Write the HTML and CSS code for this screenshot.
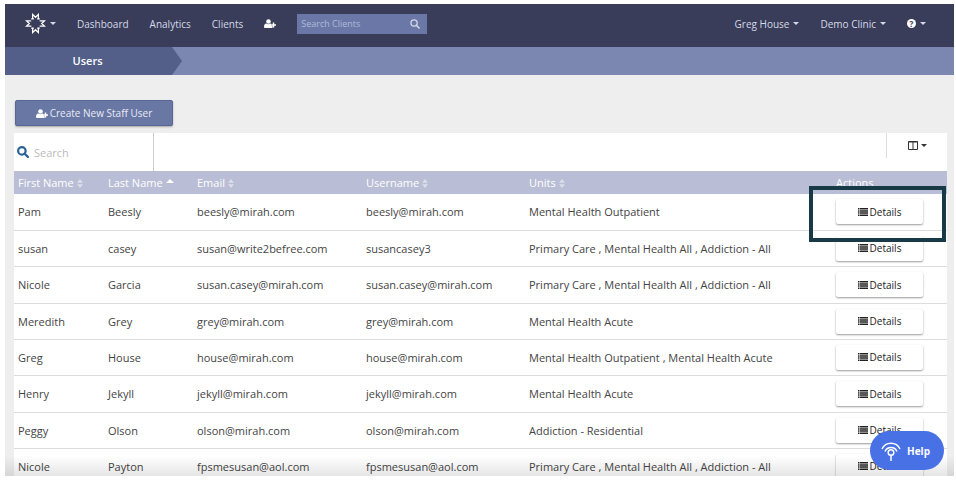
FILE: index.html
```html
<!DOCTYPE html>
<html lang="en">
<head>
    <meta charset="UTF-8">
    <meta name="viewport" content="width=device-width, initial-scale=1.0">
    <title>Users</title>
    <link rel="stylesheet" href="styles.css">
</head>
<body>

    <!-- shared icons -->
    <svg class="sprite" aria-hidden="true">
        <symbol id="user-plus" viewBox="0 0 24 18">
            <circle cx="9" cy="5" r="4.6"/>
            <path d="M5 9c1 1 2.500 1.600 4 1.600S12 10 13 9c1 .2 1.800.6 2.400 1.200H14v4h3v3.600H2.500C1 17.800 0 16.800 0 15.300 0 12 1.500 9.200 5 9z"/>
            <path d="M17.500 7h3v3.500H24v3h-3.500V17h-3v-3.500H14v-3h3.500z"/>
        </symbol>
        <symbol id="search" viewBox="0 0 16 16">
            <circle cx="6.500" cy="6.500" r="5" fill="none" stroke="currentColor" stroke-width="2"/>
            <path d="M10 10l4.500 4.500" stroke="currentColor" stroke-width="2.500" stroke-linecap="round"/>
        </symbol>
        <symbol id="search-bold" viewBox="0 0 16 16">
            <circle cx="6.500" cy="6.500" r="5" fill="none" stroke="currentColor" stroke-width="3"/>
            <path d="M10 10l4.500 4.500" stroke="currentColor" stroke-width="3" stroke-linecap="round"/>
        </symbol>
        <symbol id="sort" viewBox="0 0 8 12">
            <path d="M0 5l4-5 4 5zM0 7l4 5 4-5z"/>
        </symbol>
        <symbol id="list" viewBox="0 0 20 16">
            <path d="M0 0h3v3H0zM4 0h16v3H4zM0 4.300h3v3H0zM4 4.300h16v3H4zM0 8.600h3v3H0zM4 8.600h16v3H4zM0 13h3v3H0zM4 13h16v3H4z"/>
        </symbol>
    </svg>

    <div class="app">
        <nav class="navbar">
            <a class="brand" href="#" aria-label="Home">
                <svg class="logo" viewBox="0 0 22 22">
                    <path d="M8 6.200V1.500L11 4.500l3-3V6.200M8 15.800v4.700L11 17.500l3 3V15.800M6 8.200V8.200H1.500L4.500 11l-3 2.800H6V13M6 8.200V9M16 9V8.200h4.500L17.500 11l3 2.800H16V13M6.500 6.200H9.300M12.700 6.200H15.500M6.500 15.800H9.300M12.700 15.800H15.500"/>
                </svg>
                <span class="caret"></span>
            </a>
            <a class="nav-link" href="#">Dashboard</a>
            <a class="nav-link" href="#">Analytics</a>
            <a class="nav-link" href="#">Clients</a>
            <a class="nav-link" href="#" aria-label="Add client"><svg class="icon-user"><use href="#user-plus"/></svg></a>
            <label class="client-search">
                <input type="text" placeholder="Search Clients" aria-label="Search Clients">
                <svg class="icon-search"><use href="#search"/></svg>
            </label>
            <div class="nav-right">
                <a class="nav-link" href="#">Greg House <span class="caret"></span></a>
                <a class="nav-link" href="#">Demo Clinic <span class="caret"></span></a>
                <a class="nav-link" href="#" aria-label="Support"><span class="question">?</span><span class="caret"></span></a>
            </div>
        </nav>

        <div class="breadcrumb">
            <h1>Users</h1>
        </div>

        <main class="content">
            <button class="create-btn" type="button"><svg class="icon-user"><use href="#user-plus"/></svg> Create New Staff User</button>

            <div class="grid">
                <div class="toolbar">
                    <label class="table-search">
                        <svg class="icon-search-bold"><use href="#search-bold"/></svg>
                        <input type="text" placeholder="Search" aria-label="Search">
                    </label>
                    <button class="columns-btn" type="button" aria-label="Columns">
                        <svg class="icon-columns" viewBox="0 0 10 9"><path d="M.5.5h9v8h-9zM5 .5v8M.5 1h9"/></svg>
                        <span class="caret"></span>
                    </button>
                </div>

                <table class="users">
                    <colgroup>
                        <col class="col-first">
                        <col class="col-last">
                        <col class="col-email">
                        <col class="col-username">
                        <col>
                        <col class="col-actions">
                    </colgroup>
                    <thead>
                        <tr>
                            <th>First Name <svg class="icon-sort"><use href="#sort"/></svg></th>
                            <th>Last Name <span class="sorted"></span></th>
                            <th>Email <svg class="icon-sort"><use href="#sort"/></svg></th>
                            <th>Username <svg class="icon-sort"><use href="#sort"/></svg></th>
                            <th>Units <svg class="icon-sort"><use href="#sort"/></svg></th>
                            <th>Actions</th>
                        </tr>
                    </thead>
                    <tbody>
                        <tr>
                            <td>Pam</td>
                            <td>Beesly</td>
                            <td>beesly@mirah.com</td>
                            <td>beesly@mirah.com</td>
                            <td>Mental Health Outpatient</td>
                            <td class="highlight"><button class="details" type="button"><svg class="icon-list"><use href="#list"/></svg>Details</button></td>
                        </tr>
                        <tr>
                            <td>susan</td>
                            <td>casey</td>
                            <td>susan@write2befree.com</td>
                            <td>susancasey3</td>
                            <td>Primary Care , Mental Health All , Addiction - All</td>
                            <td><button class="details" type="button"><svg class="icon-list"><use href="#list"/></svg>Details</button></td>
                        </tr>
                        <tr>
                            <td>Nicole</td>
                            <td>Garcia</td>
                            <td>susan.casey@mirah.com</td>
                            <td>susan.casey@mirah.com</td>
                            <td>Primary Care , Mental Health All , Addiction - All</td>
                            <td><button class="details" type="button"><svg class="icon-list"><use href="#list"/></svg>Details</button></td>
                        </tr>
                        <tr>
                            <td>Meredith</td>
                            <td>Grey</td>
                            <td>grey@mirah.com</td>
                            <td>grey@mirah.com</td>
                            <td>Mental Health Acute</td>
                            <td><button class="details" type="button"><svg class="icon-list"><use href="#list"/></svg>Details</button></td>
                        </tr>
                        <tr>
                            <td>Greg</td>
                            <td>House</td>
                            <td>house@mirah.com</td>
                            <td>house@mirah.com</td>
                            <td>Mental Health Outpatient , Mental Health Acute</td>
                            <td><button class="details" type="button"><svg class="icon-list"><use href="#list"/></svg>Details</button></td>
                        </tr>
                        <tr>
                            <td>Henry</td>
                            <td>Jekyll</td>
                            <td>jekyll@mirah.com</td>
                            <td>jekyll@mirah.com</td>
                            <td>Mental Health Acute</td>
                            <td><button class="details" type="button"><svg class="icon-list"><use href="#list"/></svg>Details</button></td>
                        </tr>
                        <tr>
                            <td>Peggy</td>
                            <td>Olson</td>
                            <td>olson@mirah.com</td>
                            <td>olson@mirah.com</td>
                            <td>Addiction - Residential</td>
                            <td><button class="details" type="button"><svg class="icon-list"><use href="#list"/></svg>Details</button></td>
                        </tr>
                        <tr>
                            <td>Nicole</td>
                            <td>Payton</td>
                            <td>fpsmesusan@aol.com</td>
                            <td>fpsmesusan@aol.com</td>
                            <td>Primary Care , Mental Health All , Addiction - All</td>
                            <td><button class="details" type="button"><svg class="icon-list"><use href="#list"/></svg>Details</button></td>
                        </tr>
                    </tbody>
                </table>
            </div>
        </main>

        <div class="fade"></div>
        <button class="help" type="button">
            <svg class="icon-help" viewBox="0 0 20 20">
                <path d="M1 8a10 10 0 0 1 18 0M4 10.500a6.500 6.500 0 0 1 12 0M10 14.500V20"/>
                <circle cx="10" cy="11.500" r="2.800"/>
            </svg>
            Help
        </button>
    </div>

</body>
</html>
```
FILE: styles.css
```css
*, *::after {
    box-sizing: border-box;
}
body {
    margin: 0;
    height: 100vh;
    padding: 4px 2px 6px 5px;
    font-family: "Open Sans", "Noto Sans", sans-serif;
    font-size: 11px;
    color: #444;
    background: #fff;
    overflow: hidden;
}
button, input {
    font: inherit;
    color: inherit;
}
button {
    cursor: pointer;
}
svg {
    fill: currentColor;
    flex: none;
}
.sprite {
    display: none;
}
.app {
    position: relative;
    height: 100%;
    background: #eee;
    overflow: hidden;
}

/* top bar */
.navbar {
    display: flex;
    align-items: center;
    height: 43px;
    padding: 0 28px 4px 20px;
    gap: 21px;
    background: #393d59;
    color: #d5d8e8;
    font-size: 10px;
}
.brand, .nav-link {
    display: flex;
    align-items: center;
    gap: 4px;
    color: inherit;
    text-decoration: none;
}
.logo {
    width: 21px;
    height: 21px;
    fill: none;
    stroke: #fff;
    stroke-width: 1.3;
}
.caret {
    border: 3px solid transparent;
    border-top-color: currentColor;
    border-bottom: 0;
}
.icon-user {
    width: 12px;
    height: 9px;
    color: #fff;
}
.client-search {
    display: flex;
    align-items: center;
    width: 130px;
    height: 20px;
    padding: 0 7px 0 4px;
    background: #6b78a7;
}
.client-search input {
    flex: 1;
    min-width: 0;
    padding: 0;
    border: 0;
    outline: 0;
    background: none;
    font-size: 9px;
}
.client-search input::placeholder {
    color: #b0b8da;
}
.icon-search {
    width: 10px;
    height: 10px;
}
.icon-search-bold {
    width: 12px;
    height: 12px;
}
.nav-right {
    display: flex;
    gap: 21px;
    margin-left: auto;
}
.question {
    width: 9px;
    height: 9px;
    border-radius: 50%;
    background: #fff;
    color: #393d59;
    font-size: 8px;
    font-weight: bold;
    line-height: 9px;
    text-align: center;
}

.breadcrumb {
    height: 28px;
    background: #7b87b0;
}
.breadcrumb h1 {
    width: 177px;
    margin: 0;
    padding-right: 12px;
    background: #535f88;
    clip-path: polygon(0 0, 167px 0, 100% 50%, 167px 100%, 0 100%);
    color: #fff;
    font-size: 11px;
    font-weight: 600;
    line-height: 28px;
    text-align: center;
}

.content {
    padding: 25px 7px 0 9px;
}
.create-btn {
    display: flex;
    align-items: center;
    justify-content: center;
    gap: 2px;
    width: 158px;
    height: 26px;
    margin-left: 1px;
    padding: 0;
    border: 1px solid #5a6795;
    border-radius: 2px;
    background: #6977a5;
    box-shadow: 0 1px 2px rgba(0, 0, 0, 0.3);
    color: #e8eaf4;
    font-size: 10px;
}

/* users table */
.grid {
    margin-top: 7px;
    background: #fff;
}
.toolbar {
    display: flex;
    align-items: flex-start;
    justify-content: space-between;
    height: 38px;
}
.table-search {
    display: flex;
    align-items: center;
    gap: 5px;
    width: 140px;
    height: 38px;
    padding-left: 3px;
    border-right: 1px solid #ccc;
    color: #2a6496;
}
.table-search input {
    flex: 1;
    min-width: 0;
    padding: 0;
    border: 0;
    outline: 0;
    color: #444;
}
.table-search input::placeholder {
    color: #bbb;
}
.columns-btn {
    display: flex;
    align-items: center;
    justify-content: center;
    gap: 3px;
    width: 61px;
    height: 25px;
    padding: 0;
    border: 0;
    border-left: 1px solid #ddd;
    background: none;
    color: #333;
}
.icon-columns {
    width: 10px;
    height: 9px;
    fill: none;
    stroke: #333;
}
.users {
    width: 100%;
    table-layout: fixed;
    border-collapse: collapse;
}
.col-first {
    width: 90px;
}
.col-last {
    width: 89px;
}
.col-email {
    width: 169px;
}
.col-username {
    width: 163px;
}
.col-actions {
    width: 115px;
}
.users th {
    height: 23px;
    padding: 0 4px;
    background: #b9bdd5;
    color: #fff;
    font-weight: normal;
    text-align: left;
}
.users td {
    height: 36px;
    padding: 0 4px;
    border-bottom: 1px solid #ddd;
    white-space: nowrap;
}
.users tr:nth-child(3n) td {
    height: 37px;
}
.icon-sort {
    width: 6px;
    height: 9px;
    opacity: 0.5;
    vertical-align: -1px;
}
.sorted {
    display: inline-block;
    border: 4px solid transparent;
    border-bottom-color: #fff;
    border-top: 0;
    vertical-align: 4px;
}
.details {
    display: flex;
    align-items: center;
    justify-content: center;
    gap: 2px;
    width: 87px;
    height: 25px;
    padding: 0;
    border: 0;
    border-radius: 2px;
    background: #fff;
    box-shadow: 0 1px 2px rgba(0, 0, 0, 0.4);
    color: #222;
    font-size: 10px;
}
.icon-list {
    width: 10px;
    height: 8px;
}
.highlight {
    position: relative;
}
.highlight::after {
    content: "";
    position: absolute;
    top: -8px;
    right: 1px;
    width: 137px;
    height: 56px;
    border: 4px solid #173a46;
    pointer-events: none;
}

/* floating layer at the bottom */
.fade {
    position: absolute;
    left: 0;
    right: 0;
    bottom: 0;
    height: 20px;
    background: linear-gradient(transparent, rgba(0, 0, 0, 0.1));
    pointer-events: none;
}
.help {
    position: absolute;
    right: 10px;
    bottom: 6px;
    display: flex;
    align-items: center;
    gap: 6px;
    height: 39px;
    padding: 0 14px 0 11px;
    border: 0;
    border-radius: 20px;
    background: #4871e6;
    color: #fff;
    font-size: 10px;
    font-weight: bold;
}
.icon-help {
    width: 20px;
    height: 20px;
    fill: none;
    stroke: #fff;
    stroke-width: 1.5;
}
```
